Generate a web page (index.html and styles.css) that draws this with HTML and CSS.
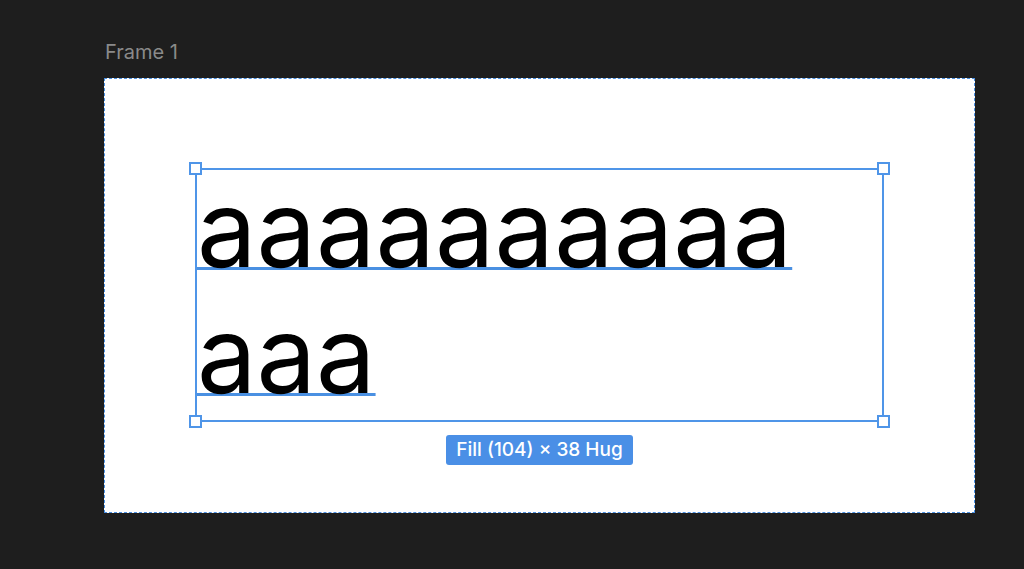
FILE: index.html
```html
<!DOCTYPE html>
<html>
<head>
    <title>Frame 1</title>
    <link rel="stylesheet" href="styles.css">
</head>
<body>
    <div class="canvas">
        <div class="frame-label">Frame 1</div>
        <div class="frame">
            <div class="selection">
                <div class="text-box">
                    <div class="line"><span>aaaaaaaaaa</span></div>
                    <div class="line"><span>aaa</span></div>
                    <i class="handle tl"></i>
                    <i class="handle tr"></i>
                    <i class="handle bl"></i>
                    <i class="handle br"></i>
                </div>
                <div class="size-badge">Fill (104) × 38 Hug</div>
            </div>
        </div>
    </div>
</body>
</html>
```

FILE: styles.css
```css
body {
    margin: 0;
    background-color: #1e1e1e;
    font-family: Inter, "Noto Sans", sans-serif;
}
.canvas {
    padding: 38px 0 0 104px;
}
.frame-label {
    color: #8a8a8a;
    font-size: 20px;
    line-height: 28px;
    margin-bottom: 12px;
    padding-left: 1px;
}
.frame {
    box-sizing: border-box;
    width: 871px;
    height: 435px;
    background-color: #fff;
    border: 1px dashed #4a90e2;
    padding: 89px 0 0 90px;
}
.selection {
    width: 689px;
    display: flex;
    flex-direction: column;
    align-items: center;
}
.text-box {
    position: relative;
    box-sizing: border-box;
    width: 689px;
    height: 254px;
    border: 2px solid #4f95e8;
}
.line {
    height: 126px;
    line-height: 118px;
    font-size: 106px;
    color: #000;
    white-space: nowrap;
}
.line span {
    text-decoration: underline;
    text-decoration-color: #4a90e2;
    text-decoration-thickness: 3px;
    text-decoration-skip-ink: none;
    text-underline-offset: 0;
}
.handle {
    position: absolute;
    box-sizing: border-box;
    width: 13px;
    height: 13px;
    background-color: #fff;
    border: 2px solid #4f95e8;
}
.handle.tl { left: -8px; top: -8px; }
.handle.tr { right: -8px; top: -8px; }
.handle.bl { left: -8px; bottom: -8px; }
.handle.br { right: -8px; bottom: -8px; }
.size-badge {
    margin-top: 13px;
    background-color: #4a8fe6;
    color: #fff;
    font-size: 19px;
    font-weight: 500;
    line-height: 30px;
    padding: 0 10px;
    border-radius: 3px;
}
```
